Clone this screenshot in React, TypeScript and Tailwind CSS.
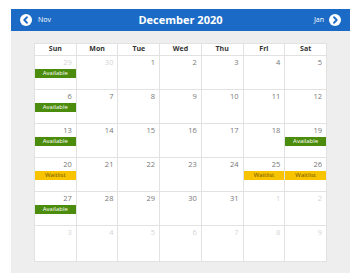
import React from 'react';

type Day = { n: number; muted?: boolean; status?: 'Available' | 'Waitlist' };

const weekdays = ['Sun', 'Mon', 'Tue', 'Wed', 'Thu', 'Fri', 'Sat'];

const weeks: Day[][] = [
  [{ n: 29, muted: true, status: 'Available' }, { n: 30, muted: true }, { n: 1 }, { n: 2 }, { n: 3 }, { n: 4 }, { n: 5 }],
  [{ n: 6, status: 'Available' }, { n: 7 }, { n: 8 }, { n: 9 }, { n: 10 }, { n: 11 }, { n: 12 }],
  [{ n: 13, status: 'Available' }, { n: 14 }, { n: 15 }, { n: 16 }, { n: 17 }, { n: 18 }, { n: 19, status: 'Available' }],
  [{ n: 20, status: 'Waitlist' }, { n: 21 }, { n: 22 }, { n: 23 }, { n: 24 }, { n: 25, status: 'Waitlist' }, { n: 26, status: 'Waitlist' }],
  [{ n: 27, status: 'Available' }, { n: 28 }, { n: 29 }, { n: 30 }, { n: 31 }, { n: 1, muted: true }, { n: 2, muted: true }],
  [{ n: 3, muted: true }, { n: 4, muted: true }, { n: 5, muted: true }, { n: 6, muted: true }, { n: 7, muted: true }, { n: 8, muted: true }, { n: 9, muted: true }],
];

function CircleChevron({ dir }: { dir: 'left' | 'right' }) {
  return (
    <svg width="12" height="12" viewBox="0 0 24 24">
      <circle cx="12" cy="12" r="12" fill="#ffffff" />
      <path
        d={dir === 'left' ? 'M14 6.5 L8.5 12 L14 17.5' : 'M10 6.5 L15.5 12 L10 17.5'}
        fill="none"
        stroke="#1b6bc6"
        strokeWidth="3.6"
        strokeLinecap="round"
        strokeLinejoin="round"
      />
    </svg>
  );
}

export default function App() {
  return (
    <div className="w-[350px] h-[273px] bg-white overflow-hidden" style={{ fontFamily: '"Open Sans", sans-serif' }}>
      <div className="ml-[11px] mt-[9px] w-[339px]">
        {/* header */}
        <div className="h-[22px] bg-[#1b6bc6] flex items-center justify-between px-[9px] text-white">
          <div className="flex items-center gap-[6px] w-[60px]">
            <CircleChevron dir="left" />
            <span className="text-[7px]">Nov</span>
          </div>
          <div className="text-[11px] font-bold">December 2020</div>
          <div className="flex items-center justify-end gap-[5px] w-[60px]">
            <span className="text-[7px]">Jan</span>
            <CircleChevron dir="right" />
          </div>
        </div>

        {/* body */}
        <div className="bg-[#eeeeee] h-[242px] pl-[23px] pt-[12px]">
          <div className="w-[293px] bg-white border-l border-t border-[#e2e2e2] grid grid-cols-7">
            {weekdays.map(w => (
              <div key={w} className="h-[12px] border-r border-b border-[#e2e2e2] flex items-center justify-center text-[7px] font-bold text-[#333333]">
                {w}
              </div>
            ))}
            {weeks.flat().map((d, i) => (
              <div key={i} className={`${i >= 35 ? 'h-[36px]' : 'h-[34px]'} border-r border-b border-[#e2e2e2] flex flex-col`}>
                <div className={`text-right pr-[4px] pt-[2px] text-[7.5px] leading-[9px] ${d.muted ? 'text-[#d4d4d4]' : 'text-[#777777]'}`}>
                  {d.n}
                </div>
                {d.status === 'Available' && (
                  <div className="mt-[2px] h-[9px] bg-[#4c8c0c] text-white text-[6px] leading-[9px] text-center">Available</div>
                )}
                {d.status === 'Waitlist' && (
                  <div className="mt-[2px] h-[9px] bg-[#f8c400] text-[#6b5300] text-[6px] leading-[9px] text-center">Waitlist</div>
                )}
              </div>
            ))}
          </div>
        </div>
      </div>
    </div>
  );
}
